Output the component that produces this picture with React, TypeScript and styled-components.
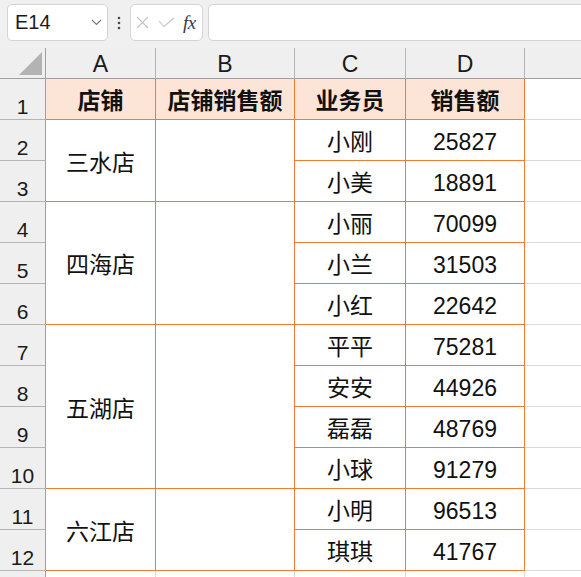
import React from 'react';
import styled, { createGlobalStyle } from 'styled-components';

const GlobalStyle = createGlobalStyle`
  html, body { margin: 0; padding: 0; background: #ffffff; overflow: hidden; }
  body { font-family: "Liberation Sans", "Noto Sans CJK SC", sans-serif; color: #111; }
`;

const ORANGE = '#ed7d31';
const GRID = '#dadada';

const Page = styled.div`
  width: 581px;
  height: 577px;
  overflow: hidden;
  display: flex;
  flex-direction: column;
  background: #fff;
`;

const Toolbar = styled.div`
  height: 48px;
  flex: none;
  box-sizing: border-box;
  background: #f0f0f0;
  display: flex;
  align-items: flex-start;
  padding: 4px 0 0 7px;
`;

const Box = styled.div<{ $w?: number }>`
  box-sizing: border-box;
  height: 37px;
  background: #ffffff;
  border: 1px solid #d4d4d4;
  border-radius: 5px;
  display: flex;
  align-items: center;
  ${p => (p.$w ? `width: ${p.$w}px; flex: none;` : 'flex: 1; margin-right: -10px;')}
`;

const NameText = styled.span`
  font-family: "Liberation Sans", sans-serif;
  font-size: 20px;
  color: #1a1a1a;
  margin-left: 7px;
  flex: 1;
`;

const Chevron = styled.svg`
  width: 11px;
  height: 7px;
  margin-right: 5px;
`;

const Dots = styled.div`
  width: 22px;
  height: 37px;
  flex: none;
  display: flex;
  align-items: center;
  justify-content: center;
`;

const FxIcons = styled.div`
  display: flex;
  align-items: center;
  gap: 9px;
  padding-left: 5px;
`;

const FxText = styled.span`
  font-family: "Liberation Serif", serif;
  font-style: italic;
  font-size: 19px;
  color: #3a3a3a;
  margin-left: -1px;
  letter-spacing: -0.5px;
`;

const Gap = styled.div`
  width: 5px;
  flex: none;
`;

const Sheet = styled.div`
  display: grid;
  grid-template-columns: 46px 110px 139px 111px 119px 1fr;
  grid-template-rows: 31px repeat(13, 41px);
`;

const Corner = styled.div`
  box-sizing: border-box;
  background: #efefef;
  border-right: 1px solid #a0a0a0;
  border-bottom: 1px solid #a0a0a0;
  display: flex;
  align-items: flex-end;
  justify-content: flex-end;
  padding: 0 3px 3px 0;
`;

const ColHead = styled.div<{ $last?: boolean }>`
  box-sizing: border-box;
  background: #efefef;
  border-right: ${p => (p.$last ? 'none' : '1px solid #b4b4b4')};
  border-bottom: 1px solid #a0a0a0;
  display: flex;
  align-items: center;
  justify-content: center;
  padding-top: 3px;
  font-family: "Liberation Sans", sans-serif;
  font-size: 23px;
  line-height: 1;
  color: #1a1a1a;
`;

const RowHead = styled.div`
  box-sizing: border-box;
  background: #efefef;
  border-right: 1px solid #a0a0a0;
  border-bottom: 1px solid #b4b4b4;
  display: flex;
  align-items: flex-end;
  justify-content: center;
  padding-bottom: 2px;
  font-family: "Liberation Sans", sans-serif;
  font-size: 21px;
  line-height: 1;
  color: #1a1a1a;
`;

const Cell = styled.div<{ $span?: number; $head?: boolean; $line?: string; $noRight?: boolean }>`
  box-sizing: border-box;
  grid-row: span ${p => p.$span ?? 1};
  background: ${p => (p.$head ? '#fce4d6' : '#ffffff')};
  border-right: ${p => (p.$noRight ? 'none' : `1px solid ${p.$line ?? ORANGE}`)};
  border-bottom: 1px solid ${p => p.$line ?? ORANGE};
  display: flex;
  align-items: center;
  justify-content: center;
  padding-top: 5px;
  font-size: 23px;
  line-height: 1;
  font-weight: ${p => (p.$head ? 700 : 400)};
  color: #111;
  white-space: nowrap;
`;

type Store = { name: string; rows: [string, string][] };

const stores: Store[] = [
  { name: '三水店', rows: [['小刚', '25827'], ['小美', '18891']] },
  { name: '四海店', rows: [['小丽', '70099'], ['小兰', '31503'], ['小红', '22642']] },
  { name: '五湖店', rows: [['平平', '75281'], ['安安', '44926'], ['磊磊', '48769'], ['小球', '91279']] },
  { name: '六江店', rows: [['小明', '96513'], ['琪琪', '41767']] },
];

export default function App() {
  const cells: React.ReactNode[] = [];
  let r = 2;
  stores.forEach((s, si) => {
    s.rows.forEach((row, i) => {
      cells.push(<RowHead key={`rh${r}`}>{r}</RowHead>);
      if (i === 0) {
        cells.push(<Cell key={`a${si}`} $span={s.rows.length}>{s.name}</Cell>);
        cells.push(<Cell key={`b${si}`} $span={s.rows.length} />);
      }
      cells.push(<Cell key={`c${r}`}>{row[0]}</Cell>);
      cells.push(<Cell key={`d${r}`}>{row[1]}</Cell>);
      cells.push(<Cell key={`e${r}`} $line={GRID} $noRight />);
      r++;
    });
  });

  return (
    <Page>
      <GlobalStyle />
      <Toolbar>
        <Box $w={101}>
          <NameText>E14</NameText>
          <Chevron viewBox="0 0 11 7">
            <polyline points="1,1 5.5,5.5 10,1" fill="none" stroke="#7a7a7a" strokeWidth="1.2" />
          </Chevron>
        </Box>
        <Dots>
          <svg width="4" height="14" viewBox="0 0 4 14">
            <circle cx="2" cy="2" r="1.3" fill="#4a4a4a" />
            <circle cx="2" cy="7" r="1.3" fill="#4a4a4a" />
            <circle cx="2" cy="12" r="1.3" fill="#4a4a4a" />
          </svg>
        </Dots>
        <Box $w={73}>
          <FxIcons>
            <svg width="13" height="13" viewBox="0 0 13 13">
              <path d="M1 1 L12 12 M12 1 L1 12" stroke="#c4c4c4" strokeWidth="1.1" fill="none" />
            </svg>
            <svg width="17" height="11" viewBox="0 0 17 11">
              <polyline points="1,4 6,9.5 16,1" stroke="#c4c4c4" strokeWidth="1.1" fill="none" />
            </svg>
            <FxText>fx</FxText>
          </FxIcons>
        </Box>
        <Gap />
        <Box />
      </Toolbar>
      <Sheet>
        <Corner>
          <svg width="23" height="23" viewBox="0 0 23 23">
            <polygon points="23,0 23,23 0,23" fill="#b3b3b3" />
          </svg>
        </Corner>
        <ColHead>A</ColHead>
        <ColHead>B</ColHead>
        <ColHead>C</ColHead>
        <ColHead>D</ColHead>
        <ColHead $last />
        <RowHead>1</RowHead>
        <Cell $head>店铺</Cell>
        <Cell $head>店铺销售额</Cell>
        <Cell $head>业务员</Cell>
        <Cell $head>销售额</Cell>
        <Cell $line={GRID} $noRight />
        {cells}
        <RowHead />
        <Cell $line={GRID} />
        <Cell $line={GRID} />
        <Cell $line={GRID} />
        <Cell $line={GRID} />
        <Cell $line={GRID} $noRight />
      </Sheet>
    </Page>
  );
}
